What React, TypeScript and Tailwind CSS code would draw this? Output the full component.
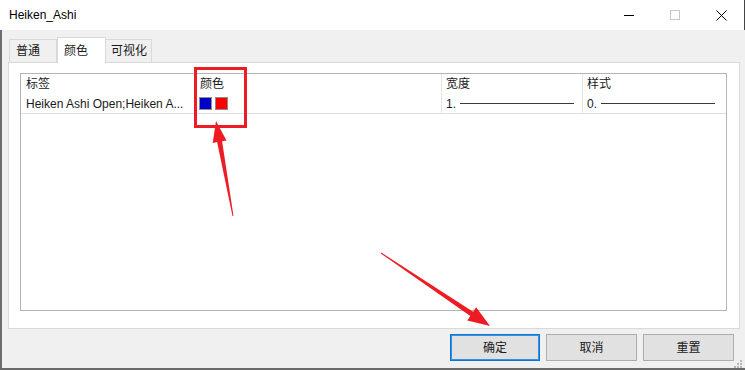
import React from "react";

const font = "font-['Liberation_Sans','Noto_Sans_CJK_SC',sans-serif]";

const Swatch = ({ color }: { color: string }) => (
  <span className={`inline-block w-[13px] h-[13px] border border-[#8c8c8c] ${color}`} />
);

const LineSample = ({ label }: { label: string }) => (
  <div className="flex items-center gap-[4px]">
    <span>{label}</span>
    <span className="block h-px w-[114px] bg-[#3a3a3a]" />
  </div>
);

const App = () => {
  return (
    <div
      className={`${font} relative w-[745px] h-[370px] overflow-hidden bg-[#f0f0f0] text-[12px] text-[#1a1a1a] flex flex-col border-b-2 border-[#6a6a6a]`}
    >
      {/* title bar */}
      <div className="h-[30px] shrink-0 bg-white flex items-center pl-[9px] border-r border-[#444]">
        <span className="text-[12px] text-black">Heiken_Ashi</span>
        <div className="ml-auto flex items-center h-full">
          <div className="w-[46px] h-full flex items-center justify-center">
            <span className="block w-[10px] h-px bg-black" />
          </div>
          <div className="w-[46px] h-full flex items-center justify-center">
            <span className="block w-[10px] h-[10px] border border-[#c8c8c8]" />
          </div>
          <div className="w-[46px] h-full flex items-center justify-center">
            <svg width="11" height="11" viewBox="0 0 11 11">
              <path d="M0.5 0.5 L10.5 10.5 M10.5 0.5 L0.5 10.5" stroke="#000" strokeWidth="1" />
            </svg>
          </div>
        </div>
      </div>

      {/* body */}
      <div className="flex-1 flex flex-col border-l-2 border-[#6d6d6d]">
        {/* tabs */}
        <div className="flex items-end h-[32px] pl-[7px] pt-[6px]">
          <div className="h-[23px] w-[48px] border border-[#d9d9d9] border-b-0 bg-[#f0f0f0] flex items-center pl-[6px]">
            普通
          </div>
          <div className="h-[26px] w-[49px] border border-[#d9d9d9] border-b-0 bg-white flex items-center pl-[6px] -mb-px relative z-10">
            颜色
          </div>
          <div className="h-[23px] w-[46px] border border-[#d9d9d9] border-b-0 border-l-0 bg-[#f0f0f0] flex items-center pl-[5px]">
            可视化
          </div>
        </div>

        {/* tab panel */}
        <div className="ml-[6px] w-[732px] h-[267px] bg-white border border-[#d9d9d9] pt-[10px] pl-[11px]">
          <div className="w-[707px] h-[238px] border border-[#b3b3ba] bg-white">
            <div className="flex h-[20px]">
              <div className="w-[174px] pl-[5px] flex items-center border-r border-[#e5e5e5]">标签</div>
              <div className="w-[247px] pl-[5px] flex items-center border-r border-[#e5e5e5]">颜色</div>
              <div className="w-[141px] pl-[4px] flex items-center border-r border-[#e5e5e5]">宽度</div>
              <div className="flex-1 pl-[4px] flex items-center">样式</div>
            </div>
            <div className="flex h-[20px] border-b border-[#e0e0e0]">
              <div className="w-[174px] pl-[5px] flex items-center border-r border-[#e5e5e5] whitespace-nowrap overflow-hidden">
                Heiken Ashi Open;Heiken A...
              </div>
              <div className="w-[247px] pl-[4px] flex items-center gap-[3px] border-r border-[#e5e5e5]">
                <Swatch color="bg-[#0000c8]" />
                <Swatch color="bg-[#ff0000]" />
              </div>
              <div className="w-[141px] pl-[4px] flex items-center border-r border-[#e5e5e5]">
                <LineSample label="1." />
              </div>
              <div className="flex-1 pl-[4px] flex items-center">
                <LineSample label="0." />
              </div>
            </div>
          </div>
        </div>

        {/* buttons */}
        <div className="flex justify-end gap-[6px] pr-[11px] pt-[5px]">
          <button className="w-[90px] h-[27px] bg-[#e1e1e1] border border-[#0078d7] shadow-[inset_0_0_0_1px_#3c8fd9]">确定</button>
          <button className="w-[91px] h-[27px] bg-[#e1e1e1] border border-[#adadad]">取消</button>
          <button className="w-[91px] h-[27px] bg-[#e1e1e1] border border-[#adadad]">重置</button>
        </div>
      </div>

      {/* annotations */}
      <svg className="absolute inset-0 pointer-events-none" width="745" height="370" viewBox="0 0 745 370">
        <rect x="195.5" y="68.5" width="50" height="58" fill="none" stroke="#ed1c24" strokeWidth="3" />
        <polygon
          fill="#ed1c24"
          points="232.5,216.1 217.1,142.1 212.7,142.9 216,121 226.5,140.5 222.1,141.3 233.5,215.9"
        />
        <polygon
          fill="#ed1c24"
          points="381.28,252.58 473.09,311.72 476.15,307.15 490,326 467.25,320.45 470.31,315.88 380.72,253.42"
        />
        <g fill="#b8b8b8">
          <rect x="740" y="360" width="2" height="2" />
          <rect x="737" y="363" width="2" height="2" />
          <rect x="740" y="363" width="2" height="2" />
          <rect x="734" y="366" width="2" height="2" />
          <rect x="737" y="366" width="2" height="2" />
          <rect x="740" y="366" width="2" height="2" />
        </g>
      </svg>
    </div>
  );
};

export default App;
